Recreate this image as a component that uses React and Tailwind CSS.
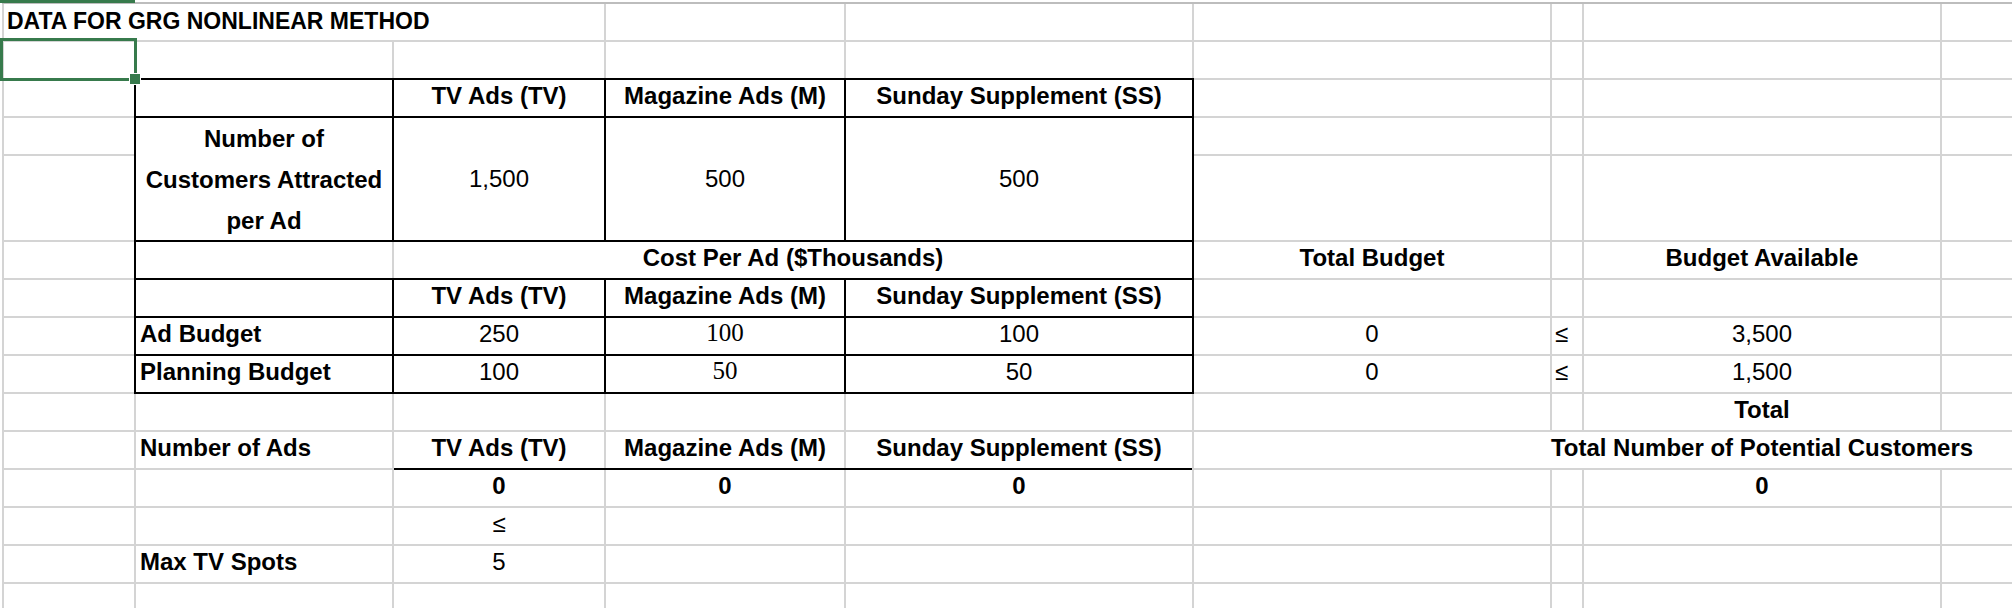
import React from "react";

const box = "shadow-[0_0_0_2px_#000]";
const center = "justify-center";
const left = "justify-start pl-[4px]";
const serif = "font-['Liberation_Serif','Times_New_Roman',serif] text-[25px]";

const valign = {
  end: "items-end pb-[2px]",
  serif: "items-end pb-[3px]",
  middle: "items-center",
};

function Cell({ children, className = "", v = "end" }) {
  return (
    <div className={`flex whitespace-nowrap bg-white ${valign[v]} ${className}`}>
      {children}
    </div>
  );
}

const blank = (n, key) =>
  Array.from({ length: n }, (_, i) => <Cell key={`${key}-${i}`} />);

export default function App() {
  return (
    <div className="relative h-[608px] w-[2012px] overflow-hidden bg-white pl-[2px] pt-[2px] font-['Liberation_Sans',Arial,sans-serif] text-[24px] leading-normal text-black">
      <div className="grid grid-cols-[130px_256px_210px_238px_346px_356px_30px_356px_1fr] grid-rows-[36px_36px_36px_36px_84px_36px_36px_36px_36px_36px_36px_36px_36px_36px_36px] gap-[2px] border-t-2 border-t-[#bdbdbd] bg-[#d4d4d4] pl-[2px]">
        {/* row 1 */}
        <Cell className="col-span-3 pl-[3px] text-[23px] font-bold">
          DATA FOR GRG NONLINEAR METHOD
        </Cell>
        {blank(6, "r1")}

        {/* row 2 */}
        {blank(9, "r2")}

        {/* row 3 - customers table header */}
        {blank(1, "r3a")}
        <Cell className={box} />
        <Cell className={`${box} ${center} font-bold`}>TV Ads (TV)</Cell>
        <Cell className={`${box} ${center} font-bold`}>Magazine Ads (M)</Cell>
        <Cell className={`${box} ${center} font-bold`}>Sunday Supplement (SS)</Cell>
        {blank(4, "r3b")}

        {/* rows 4-5 */}
        {blank(1, "r4a")}
        <Cell v="middle" className={`${box} row-span-2 justify-center whitespace-normal text-center font-bold leading-[41px]`}>
          <span>
            Number of
            <br />
            Customers Attracted
            <br />
            per Ad
          </span>
        </Cell>
        <Cell v="middle" className={`${box} ${center} row-span-2`}>1,500</Cell>
        <Cell v="middle" className={`${box} ${center} row-span-2`}>500</Cell>
        <Cell v="middle" className={`${box} ${center} row-span-2`}>500</Cell>
        {blank(4, "r4b")}
        {blank(5, "r5")}

        {/* row 6 */}
        {blank(1, "r6a")}
        <Cell className="shadow-[-2px_0_0_0_#000]" />
        <Cell className={`col-span-3 ${center} font-bold shadow-[2px_0_0_0_#000]`}>
          Cost Per Ad ($Thousands)
        </Cell>
        <Cell className={`${center} font-bold`}>Total Budget</Cell>
        <Cell />
        <Cell className={`${center} font-bold`}>Budget Available</Cell>
        <Cell />

        {/* row 7 */}
        {blank(1, "r7a")}
        <Cell className={box} />
        <Cell className={`${box} ${center} font-bold`}>TV Ads (TV)</Cell>
        <Cell className={`${box} ${center} font-bold`}>Magazine Ads (M)</Cell>
        <Cell className={`${box} ${center} font-bold`}>Sunday Supplement (SS)</Cell>
        {blank(4, "r7b")}

        {/* row 8 */}
        {blank(1, "r8a")}
        <Cell className={`${box} ${left} font-bold`}>Ad Budget</Cell>
        <Cell className={`${box} ${center}`}>250</Cell>
        <Cell v="serif" className={`${box} ${center} ${serif}`}>100</Cell>
        <Cell className={`${box} ${center}`}>100</Cell>
        <Cell className={center}>0</Cell>
        <Cell className="pl-[3px]">≤</Cell>
        <Cell className={center}>3,500</Cell>
        <Cell />

        {/* row 9 */}
        {blank(1, "r9a")}
        <Cell className={`${box} ${left} font-bold`}>Planning Budget</Cell>
        <Cell className={`${box} ${center}`}>100</Cell>
        <Cell v="serif" className={`${box} ${center} ${serif}`}>50</Cell>
        <Cell className={`${box} ${center}`}>50</Cell>
        <Cell className={center}>0</Cell>
        <Cell className="pl-[3px]">≤</Cell>
        <Cell className={center}>1,500</Cell>
        <Cell />

        {/* row 10 */}
        {blank(7, "r10a")}
        <Cell className={`${center} font-bold`}>Total</Cell>
        <Cell />

        {/* row 11 */}
        {blank(1, "r11a")}
        <Cell className={`${left} font-bold`}>Number of Ads</Cell>
        <div className="col-span-3 flex gap-[2px] bg-[#d4d4d4] shadow-[0_2px_0_0_#000]">
          <Cell className={`w-[210px] ${center} font-bold`}>TV Ads (TV)</Cell>
          <Cell className={`w-[238px] ${center} font-bold`}>Magazine Ads (M)</Cell>
          <Cell className={`flex-1 ${center} font-bold`}>Sunday Supplement (SS)</Cell>
        </div>
        <Cell className="col-span-4">
          <div className="ml-[390px] flex w-[356px] justify-center font-bold">
            Total Number of Potential Customers
          </div>
        </Cell>

        {/* row 12 */}
        {blank(2, "r12a")}
        <Cell className={`${center} font-bold`}>0</Cell>
        <Cell className={`${center} font-bold`}>0</Cell>
        <Cell className={`${center} font-bold`}>0</Cell>
        {blank(2, "r12b")}
        <Cell className={`${center} font-bold`}>0</Cell>
        <Cell />

        {/* row 13 */}
        {blank(2, "r13a")}
        <Cell className={center}>≤</Cell>
        {blank(6, "r13b")}

        {/* row 14 */}
        {blank(1, "r14a")}
        <Cell className={`${left} font-bold`}>Max TV Spots</Cell>
        <Cell className={center}>5</Cell>
        {blank(6, "r14b")}

        {/* row 15 */}
        {blank(9, "r15")}
      </div>

      {/* column header indicator + active cell selection */}
      <div className="absolute left-0 top-0 h-[3px] w-[135px] bg-[#377a4c]" />
      <div className="absolute left-0 top-[38px] h-[43px] w-[137px] border-[3px] border-[#377a4c]" />
      <div className="absolute left-[130px] top-[74px] h-[10px] w-[10px] bg-[#377a4c] outline outline-1 outline-white" />
    </div>
  );
}
